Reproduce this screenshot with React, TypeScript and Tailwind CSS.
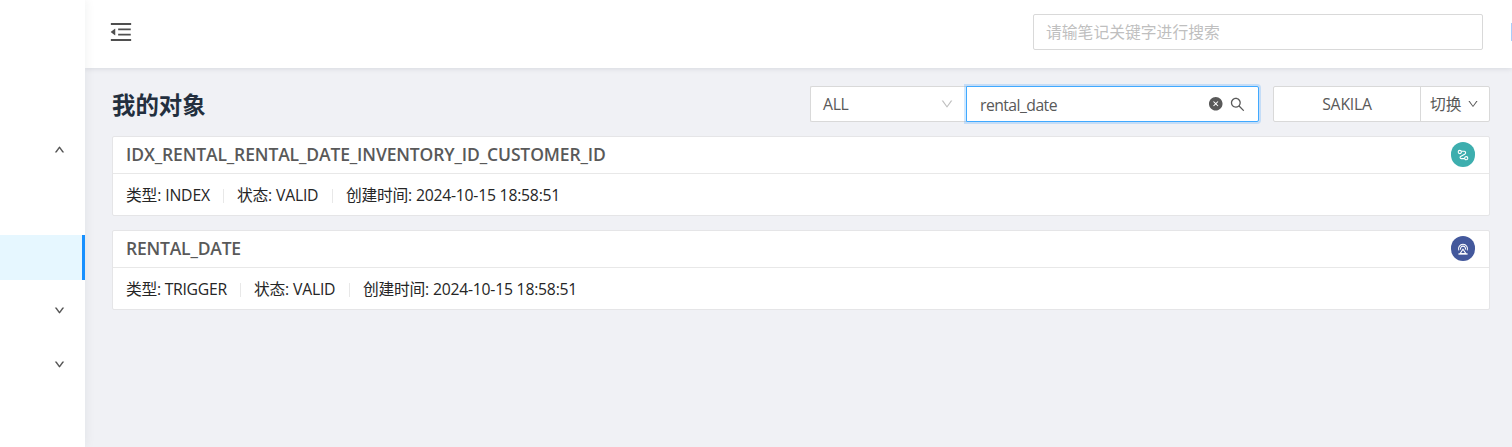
import React from "react";
import {
  AiFillCloseCircle,
  AiOutlineDown,
  AiOutlineMenuFold,
  AiOutlineSearch,
} from "react-icons/ai";

const textFont =
  "font-['Open_Sans','Noto_Sans_CJK_SC',sans-serif]";

type Detail = { label: string; value: string; width: string; tracking: string };

function IndexIcon() {
  return (
    <svg viewBox="0 0 12 12" className="size-3" fill="none" stroke="white" strokeWidth="1.1">
      <circle cx="2.8" cy="3" r="1.6" />
      <circle cx="9.2" cy="9.2" r="1.6" />
      <path d="M4.5 2.3H7a1.5 1.5 0 0 1 1 2.7L3.6 7.4a1.2 1.2 0 0 0 .6 2.2H7.5" />
    </svg>
  );
}

function TriggerIcon() {
  return (
    <svg viewBox="0 0 12 12" className="size-3" fill="none" stroke="white" strokeWidth="1.1">
      <path d="M1.8 7.4a4.5 4.5 0 1 1 8.4 0" />
      <path d="M3.7 6.6a2.5 2.5 0 1 1 4.6 0" />
      <path d="M6 6.2 9 10.6H3Z" />
      <path d="M1.3 11h9.4" />
    </svg>
  );
}

function ObjectCard({
  title,
  titleTracking,
  details,
  color,
  icon,
}: {
  title: string;
  titleTracking: string;
  details: Detail[];
  color: string;
  icon: React.ReactNode;
}) {
  return (
    <section className="h-20 rounded-[2px] border border-[#e5e5e7] bg-white">
      <header className="flex h-[37px] items-center justify-between border-b border-[#e8e8e8] pr-3.5 pb-px pl-[13px]">
        <h2 className={`pb-0.5 whitespace-nowrap text-[17.5px] leading-6 font-semibold text-[#595959] ${titleTracking}`}>
          {title}
        </h2>
        <span className={`flex h-[25px] w-6 items-center justify-center rounded-full ${color}`}>
          {icon}
        </span>
      </header>
      <div className="flex h-[41px] items-center pt-[3px] pl-[13px] text-[15.75px] text-[#262626]">
        {details.map((d, i) => (
          <React.Fragment key={d.label}>
            {i > 0 && <span className="mr-[13px] ml-[13px] h-3.5 w-px shrink-0 bg-[#e8e8e8]" />}
            <span className={`shrink-0 whitespace-nowrap ${d.width} ${d.tracking}`}>
              {d.label}: {d.value}
            </span>
          </React.Fragment>
        ))}
      </div>
    </section>
  );
}

export default function App() {
  return (
    <div className={`flex h-[447px] w-full overflow-hidden bg-[#f0f1f5] ${textFont}`}>
      <aside className="relative z-10 flex w-[85px] shrink-0 flex-col bg-white text-[#4a4a4a] shadow-[2px_0_9px_rgba(29,35,41,0.05)]">
        <div className="flex h-[300px] flex-col pt-[144px]">
          <AiOutlineDown className="ml-[54px] size-[11px] shrink-0 rotate-180 stroke-[50]" />
          <div className="mt-20 h-[45px] shrink-0 border-r-[3px] border-[#1890ff] bg-[#e6f7ff]" />
        </div>
        <AiOutlineDown className="mt-[5px] ml-[54px] size-[11px] shrink-0 stroke-[50]" />
        <AiOutlineDown className="mt-[43px] ml-[54px] size-[11px] shrink-0 stroke-[50]" />
      </aside>

      <div className="flex min-w-0 flex-1 flex-col">
        <header className="flex h-[68px] shrink-0 items-start bg-white shadow-[0_1px_5px_rgba(0,21,41,0.1)]">
          <AiOutlineMenuFold className="mt-[19px] ml-[23px] size-[26px] text-[#4f4f4f]" />
          <input
            className="mt-3.5 ml-auto h-9 w-[450px] rounded-[2px] border border-[#d9d9d9] bg-white px-3 text-[15.8px] outline-none placeholder:text-[#bfbfbf]"
            placeholder="请输笔记关键字进行搜索"
          />
          <span className="mt-[23px] ml-7 h-[18px] w-px bg-[#a9cdfa]" />
        </header>

        <main className="flex flex-col pr-[22px] pl-[27px]">
          <div className="flex h-[68px] items-start pt-[18px] text-[15.75px] text-[#595959]">
            <h1 className="text-[23.4px] leading-[38px] font-bold text-[#232f3e]">我的对象</h1>
            <div className="ml-auto flex">
              <div className="flex h-9 w-[156px] items-center justify-between rounded-l-[2px] border border-r-0 border-[#d9d9d9] bg-white pr-3 pl-3">
                <span className="pt-0.5 tracking-[-0.3px]">ALL</span>
                <AiOutlineDown className="size-[14px] text-[#bfbfbf]" />
              </div>
              <div className="z-10 flex h-9 w-[293px] items-center rounded-r-[2px] border border-[#40a9ff] bg-white pr-3.5 pl-[13px] shadow-[0_0_0_2px_rgba(24,144,255,0.2)]">
                <span className="flex-1 pt-[3px] tracking-[-0.55px]">rental_date</span>
                <AiFillCloseCircle className="mb-px size-[15.5px]" />
                <AiOutlineSearch className="-mr-0.5 ml-1.5 size-[17px]" />
              </div>
            </div>
            <div className="ml-3.5 flex h-9 rounded-[2px] border border-[#d9d9d9] bg-white">
              <div className="flex w-[147px] items-center justify-center border-r border-[#d9d9d9]">
                <span className="pt-0.5 tracking-[-0.2px]">SAKILA</span>
              </div>
              <div className="flex w-[68px] items-center pl-[9px]">
                <span className="pt-0.5">切换</span>
                <AiOutlineDown className="ml-[5px] size-3" />
              </div>
            </div>
          </div>

          <div className="flex flex-col gap-3.5">
            <ObjectCard
              title="IDX_RENTAL_RENTAL_DATE_INVENTORY_ID_CUSTOMER_ID"
              titleTracking="tracking-[-0.13px]"
              color="bg-[#3daeae]"
              icon={<IndexIcon />}
              details={[
                { label: "类型", value: "INDEX", width: "w-[84px]", tracking: "tracking-[-0.15px]" },
                { label: "状态", value: "VALID", width: "w-[82px]", tracking: "tracking-[-0.2px]" },
                { label: "创建时间", value: "2024-10-15 18:58:51", width: "w-[214px]", tracking: "tracking-[-0.23px]" },
              ]}
            />
            <ObjectCard
              title="RENTAL_DATE"
              titleTracking="tracking-[-0.2px]"
              color="bg-[#43589c]"
              icon={<TriggerIcon />}
              details={[
                { label: "类型", value: "TRIGGER", width: "w-[101px]", tracking: "tracking-[-0.28px]" },
                { label: "状态", value: "VALID", width: "w-[82px]", tracking: "tracking-[-0.2px]" },
                { label: "创建时间", value: "2024-10-15 18:58:51", width: "w-[214px]", tracking: "tracking-[-0.23px]" },
              ]}
            />
          </div>
        </main>
      </div>
    </div>
  );
}
